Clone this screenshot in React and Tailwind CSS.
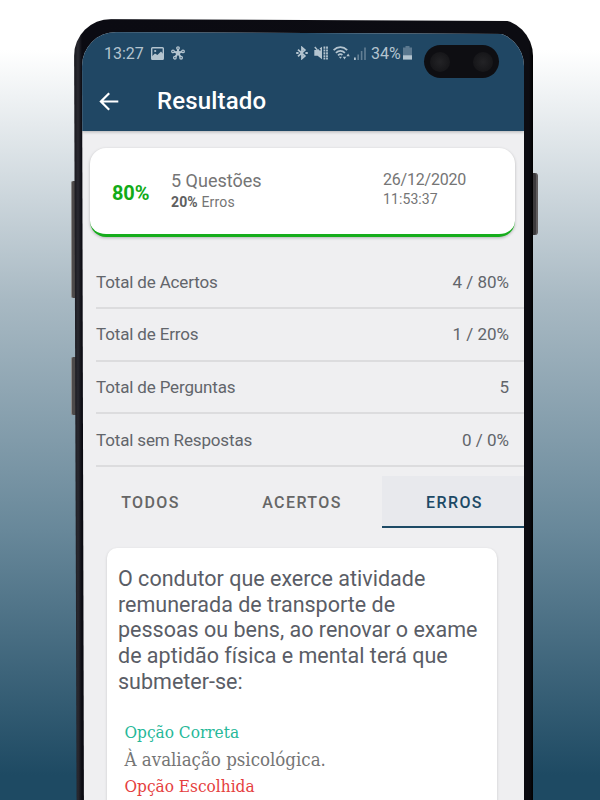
import React from 'react';

const totals = [
  { id: 'hits', label: 'Total de Acertos', value: '4 / 80%' },
  { id: 'misses', label: 'Total de Erros', value: '1 / 20%' },
  { id: 'questions', label: 'Total de Perguntas', value: '5' },
  { id: 'blank', label: 'Total sem Respostas', value: '0 / 0%' },
];

const questionLines = [
  'O condutor que exerce atividade',
  'remunerada de transporte de',
  'pessoas ou bens, ao renovar o exame',
  'de aptidão física e mental terá que',
  'submeter-se:',
];

const PictureIcon = () => (
  <svg className="ml-[8px] h-[13px] w-[13px]" viewBox="0 0 13 13" fill="none" stroke="currentColor">
    <rect x="0.7" y="0.7" width="11.6" height="11.6" rx="0.8" strokeWidth="1.4" />
    <path d="M1 9.2 4 6.4 6.4 8 10 4.6 12 6.8V12H1Z" fill="currentColor" stroke="none" />
    <circle cx="4.2" cy="4" r="1.1" fill="currentColor" stroke="none" />
  </svg>
);

const HubIcon = () => (
  <svg className="ml-[7px] h-[14px] w-[14px]" viewBox="0 0 14 14" fill="none" stroke="currentColor" strokeWidth="1.3">
    <path d="M7 7V3M7 7 3 5.6M7 7 11 5.6M7 7 4.6 10.6M7 7 9.4 10.6" strokeWidth="2" />
    <circle cx="7" cy="2.1" r="1.3" />
    <circle cx="2" cy="5.4" r="1.3" />
    <circle cx="12" cy="5.4" r="1.3" />
    <circle cx="3.9" cy="11.7" r="1.3" />
    <circle cx="10.1" cy="11.7" r="1.3" />
    <circle cx="7" cy="7" r="1.7" fill="currentColor" />
  </svg>
);

const BluetoothIcon = () => (
  <svg className="h-[14px] w-[12px]" viewBox="0 0 12 14" fill="none" stroke="currentColor" strokeWidth="1.8">
    <path d="M2 3.6 8.8 9.9 6 12.4V1.6L8.8 4.1 2 10.4" />
    <path d="M0.2 7H2.6M9.4 7H11.8" strokeWidth="2.2" />
  </svg>
);

const MuteIcon = () => (
  <svg className="ml-[6px] h-[14px] w-[14px]" viewBox="0 0 14 14" fill="none" stroke="currentColor">
    <path d="M0.3 4H3.4L8 0.8V13.2L3.6 9.8H0.3Z" fill="currentColor" stroke="none" />
    <path d="M0.8 1 3.4 4" strokeWidth="1.4" />
    <path d="M3.8 1.4 6.4 4.4" stroke="#204764" strokeWidth="1.4" />
    <path d="M10.4 0.5V13.5M13 0.5V13.5" strokeWidth="1.8" strokeDasharray="2.2 0.7" />
  </svg>
);

const WifiIcon = () => (
  <svg className="ml-[5px] h-[14px] w-[17px]" viewBox="0 0 17 14" fill="none" stroke="currentColor" strokeWidth="1.7">
    <path d="M0.6 4.2C4.6 0.2 10.2 0.2 14.2 4.2M2.9 6.9C5.6 4.2 9.2 4.2 11.9 6.9M5 9.4C6.5 8 8.3 8 9.4 9" />
    <path d="M5.8 10.8H9L7.4 12.8Z" fill="currentColor" stroke="none" />
    <path d="M9.8 10.8H13.2L11.5 13.4ZM13.4 10.2H16.8L15.1 7.4Z" fill="currentColor" stroke="none" />
  </svg>
);

const SignalIcon = () => (
  <svg className="ml-[4px] h-[13px] w-[12px]" viewBox="0 0 12 13" fill="currentColor">
    <rect x="0" y="10.5" width="1.8" height="2.5" />
    <rect x="3.4" y="7.5" width="1.6" height="5.5" opacity="0.45" />
    <rect x="6.8" y="4" width="1.6" height="9" opacity="0.45" />
    <rect x="10.2" y="0.5" width="1.6" height="12.5" opacity="0.45" />
  </svg>
);

const BatteryIcon = () => (
  <svg className="ml-[2px] h-[14px] w-[9px]" viewBox="0 0 9 14" fill="currentColor">
    <path d="M2.5 0H6.5V1.4H9V9.2H0V1.4H2.5Z" opacity="0.4" />
    <rect x="0" y="9.2" width="9" height="4.4" />
  </svg>
);

const Camera = () => (
  <div className="absolute left-[342px] top-[13px] flex h-[33px] w-[75px] items-center justify-between rounded-full bg-[#0e0e12] px-[6px]">
    <span className="h-[20px] w-[20px] rounded-full bg-[radial-gradient(circle,#232326_0%,#18181b_60%,#131317_100%)]" />
    <span className="h-[20px] w-[20px] rounded-full bg-[radial-gradient(circle,#232326_0%,#18181b_60%,#131317_100%)]" />
  </div>
);

const StatusBar = () => (
  <div className="flex h-[42px] items-center pl-[22px] text-[16px] leading-none text-[#b4c4cf]">
    <span className="w-[39px] whitespace-nowrap pt-px">13:27</span>
    <PictureIcon />
    <HubIcon />
    <div className="ml-[111px] flex items-center">
      <BluetoothIcon />
      <MuteIcon />
      <WifiIcon />
      <SignalIcon />
      <span className="ml-[5px] w-[30px] whitespace-nowrap pt-px">34%</span>
      <BatteryIcon />
    </div>
  </div>
);

const Header = () => (
  <header className="relative h-[99px] shrink-0 bg-[#204764] shadow-[0_1px_3px_rgba(0,0,0,0.25)]">
    <StatusBar />
    <Camera />
    <div className="flex h-[54px] items-center pl-[17px] text-white">
      <svg className="h-[19px] w-[20px]" viewBox="0 0 20 19" fill="none" stroke="currentColor" strokeWidth="2.2">
        <path d="M19.3 9.5H2M10.2 1.2 1.9 9.5 10.2 17.8" />
      </svg>
      <h1 className="ml-[38px] text-[24px] font-medium leading-none tracking-[0.15px]">Resultado</h1>
    </div>
  </header>
);

const ScoreCard = () => (
  <section className="ml-[8px] mt-[17px] flex h-[89px] w-[425px] shrink-0 rounded-[16px] border-b-[3px] border-[#16ad1c] bg-white shadow-[0_1px_3px_rgba(0,0,0,0.25)]">
    <div className="w-[81px] pl-[22px] pt-[33px] text-[20px] font-bold leading-[24px] tracking-[-0.1px] text-[#12ab18]">80%</div>
    <div className="w-[212px] pt-[22px] text-[#757575]">
      <div className="text-[18px] leading-[22px]">5 Questões</div>
      <div className="text-[14px] leading-[20px] tracking-[0.15px]">
        <b className="font-bold text-[#5f5f5f]">20%</b> Erros
      </div>
    </div>
    <div className="pt-[21px] text-[#757575]">
      <div className="text-[16px] leading-[21px] tracking-[-0.2px]">26/12/2020</div>
      <div className="text-[14px] leading-[19px] tracking-[0.1px]">11:53:37</div>
    </div>
  </section>
);

const Totals = () => (
  <ul className="ml-[14px] mt-[19px] shrink-0">
    {totals.map((row) => (
      <li
        key={row.id}
        className="flex h-[52.8px] items-center justify-between border-b-2 border-[#dcdcde] pr-[15px] pt-[2px] text-[17px] text-[#62656b]"
      >
        <span className="tracking-[-0.15px]">{row.label}</span>
        <span>{row.value}</span>
      </li>
    ))}
  </ul>
);

const Tabs = () => (
  <nav className="mt-[9px] flex h-[52px] shrink-0 text-[16px] font-medium tracking-[1.4px] text-[#666]">
    <button className="w-[137px] pt-px">TODOS</button>
    <button className="w-[163px] pl-[3px] pt-px">ACERTOS</button>
    <button className="flex-1 border-b-2 border-[#1d4a66] bg-[#e8e9ed] pl-[3px] pt-[3px] text-[#1d4a66]">ERROS</button>
  </nav>
);

const QuestionCard = () => (
  <article className="ml-[25px] mt-[20px] h-[300px] w-[390px] shrink-0 rounded-[10px] bg-white pl-[11px] pt-[18px] shadow-[0_1px_3px_rgba(0,0,0,0.16)]">
    <p className="text-[21.5px] leading-[25.6px] text-[#5a5d66]">
      {questionLines.map((line) => (
        <span key={line} className="block whitespace-nowrap">
          {line}
        </span>
      ))}
    </p>
    <div className="mt-[24.5px] pl-[6.5px] font-['DejaVu_Serif_Condensed','DejaVu_Serif',serif] text-[17.1px] leading-[27px] text-[#757575]">
      <div className="text-[#26b899]">Opção Correta</div>
      <div className="text-[18.5px]">À avaliação psicológica.</div>
      <div className="text-[#e53e3e]">Opção Escolhida</div>
    </div>
  </article>
);

export default function App() {
  return (
    <div className="relative h-[800px] w-[600px] overflow-hidden bg-[linear-gradient(180deg,#ffffff_50px,#a8b9c3_300px,#68889a_530px,#1e4a63_775px)] font-[Roboto,sans-serif]">
      {/* Side keys */}
      <div className="absolute left-[71px] top-[181px] h-[117px] w-[6px] rounded-l-[2px] border-l border-[#8a8a8a] bg-[#4d4a4a]" />
      <div className="absolute left-[71px] top-[357px] h-[58px] w-[6px] rounded-l-[2px] border-l border-[#8a8a8a] bg-[#4d4a4a]" />
      <div className="absolute left-[530px] top-[173px] h-[62px] w-[8px] rounded-r-[3px] border-r-2 border-[#5f5c5d] bg-[#3c3a3c]" />

      {/* Phone body */}
      <div className="ml-[74px] h-[800px] w-[459px] pt-[19px]">
        <div className="h-[900px] rounded-t-[37px] bg-[linear-gradient(90deg,#15151b_0px,#2a2a31_4px,#0b0b12_8px,#0c0c12_455px,#000_459px)] pl-[8px] pr-[9px] pt-[13px] [clip-path:polygon(0_0,100%_2px,100%_100%,3px_100%)]">
          <main className="flex h-[800px] flex-col overflow-hidden rounded-t-[34px] bg-[#efeff1] [clip-path:polygon(0_0,100%_2px,100%_100%,2px_100%)]">
            <Header />
            <ScoreCard />
            <Totals />
            <Tabs />
            <QuestionCard />
          </main>
        </div>
      </div>
    </div>
  );
}
